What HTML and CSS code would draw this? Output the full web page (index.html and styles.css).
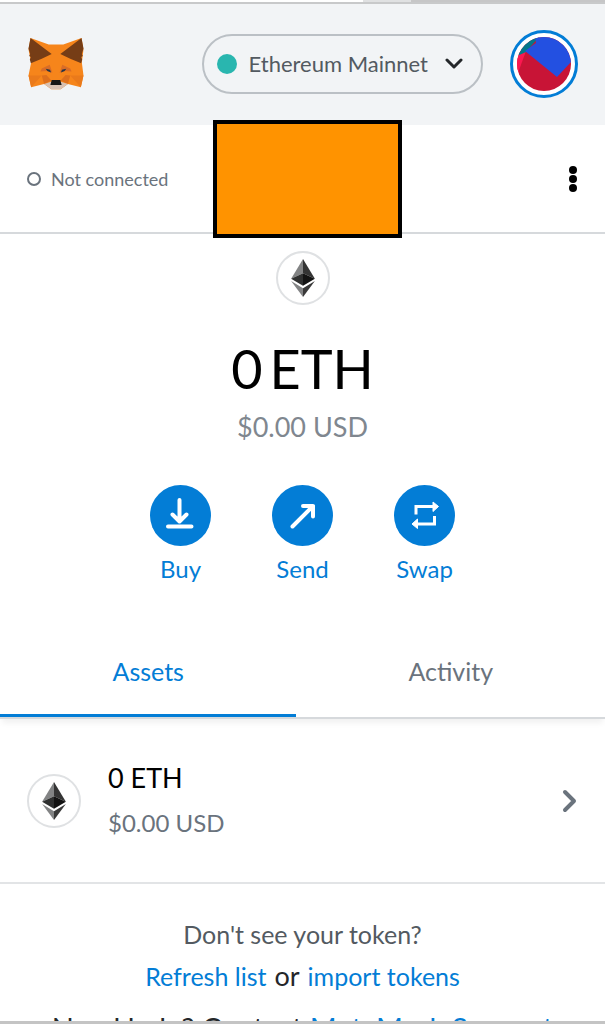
FILE: index.html
```html
<!DOCTYPE html>
<html lang="en">
<head>
<meta charset="utf-8">
<meta name="viewport" content="width=device-width, initial-scale=1">
<title>MetaMask</title>
<link rel="stylesheet" href="styles.css">
</head>
<body>
<svg class="defs" aria-hidden="true">
  <symbol id="eth" viewBox="0 0 70 112">
    <path fill="#828384" d="M35 0 0 58 35 42z"/>
    <path fill="#343434" d="M35 0 70 58 35 42z"/>
    <path fill="#2f3030" d="M0 58 35 42V79z"/>
    <path fill="#131313" d="M70 58 35 42V79z"/>
    <path fill="#828384" d="M0 65 35 86V112z"/>
    <path fill="#393939" d="M70 65 35 86V112z"/>
  </symbol>
</svg>
<div class="popup">
  <div class="strip"><span class="strip-light"></span><span class="strip-dark"></span></div>
  <header class="header">
    <svg class="fox" viewBox="42 40 166 157" role="img" aria-label="MetaMask">
      <path fill="#f6851b" d="M48 40 103 60H147L202 40 208 75 203 114 208 153 200 189 161 179 139 195H111L89 179 50 189 42 153 50 114 42 75z"/>
      <path fill="#763d16" d="M48 40 112 88 82 103 49 116 46 105 49 97 44 94 47 88 42 72z"/>
      <path fill="#763d16" d="M202 40 138 88 168 103 201 116 204 105 201 97 206 94 203 88 208 72z"/>
      <path fill="#ea7a1b" d="M42 153H82L50 189zM208 153H168L200 189z"/>
      <path fill="#dd6f1c" d="M82 153 96 152 111 168 89 179zM168 153 154 152 139 168 161 179z"/>
      <path fill="#d96d27" d="M82 132 106 121 114 145 96 140 78 141zM168 132 144 121 136 145 154 140 172 141z"/>
      <path fill="#233447" d="M94 133 107 136 110 144 99 140zM156 133 143 136 140 144 151 140z"/>
      <path fill="#d7c1b3" d="M89 179 110 172H140L161 179 139 195H111z"/>
      <path fill="#161616" d="M112 167H138L142 182H108z"/>
    </svg>
    <button class="network" type="button">
      <span class="network-dot"></span>
      <span>Ethereum Mainnet</span>
      <svg class="network-chevron" viewBox="0 0 18 12"><path d="M2 2 9 9 16 2"/></svg>
    </button>
    <button class="account" type="button" aria-label="Account">
      <svg viewBox="0 0 54 54">
        <clipPath id="disc"><circle cx="27" cy="27" r="27"/></clipPath>
        <g clip-path="url(#disc)">
          <path fill="#c81436" d="M0 0H54V54H0z"/>
          <path fill="#fb1850" d="M0 14H9L1 36H0z"/>
          <path fill="#03788a" d="M0 0H22L9 15 0 19z"/>
          <path fill="#2350e1" d="M18 0H54V25L40 40 8 14 19 6z"/>
        </g>
      </svg>
    </button>
  </header>
  <div class="menu-bar">
    <button class="connection" type="button"><span class="connection-ring"></span>Not connected</button>
    <div class="cover"></div>
    <button class="more" type="button" aria-label="Account options">
      <svg viewBox="0 0 8 28"><circle cx="4" cy="5" r="4"/><circle cx="4" cy="14" r="4"/><circle cx="4" cy="23" r="4"/></svg>
    </button>
  </div>
  <main>
    <section class="overview">
      <span class="token"><svg><use href="#eth"/></svg></span>
      <h1 class="balance"><span>0</span> <span>ETH</span></h1>
      <p class="fiat">$0.00 USD</p>
      <div class="actions">
        <button class="action" type="button">
          <svg viewBox="0 0 61 61"><circle cx="30.5" cy="30.5" r="30.5"/><path class="round" d="M29.500 15V35M22.500 29.500 29.500 36.500 36.500 29.500M18 41.500H41.500"/></svg>
          Buy
        </button>
        <button class="action" type="button">
          <svg viewBox="0 0 61 61"><circle cx="30.500" cy="30.500" r="30.500"/><path class="round" d="M20.500 41.500 41 21M31 21H41V31.500"/></svg>
          Send
        </button>
        <button class="action" type="button">
          <svg viewBox="0 0 61 61"><circle cx="30.500" cy="30.500" r="30.500"/><path d="M22 29.500V21.500H40M40.500 31V39H22"/><path class="tip" d="M39 17 44.500 21.500 39 26.500zM23.500 34 18 39 23.500 43.500z"/></svg>
          Swap
        </button>
      </div>
    </section>
    <nav class="tabs">
      <button class="tab tab-active" type="button">Assets</button>
      <button class="tab" type="button">Activity</button>
    </nav>
    <button class="asset" type="button">
      <span class="token"><svg><use href="#eth"/></svg></span>
      <span class="asset-text">
        <span class="asset-amount">0 ETH</span>
        <span class="asset-fiat">$0.00 USD</span>
      </span>
      <svg class="asset-chevron" viewBox="0 0 16 26"><path d="M3 4 12 13 3 22"/></svg>
    </button>
    <footer class="footer">
      <p class="hint">Don't see your token?</p>
      <p class="links"><a href="#">Refresh list</a> <span class="or">or</span> <a href="#">import tokens</a></p>
      <p class="help">Need help? Contact <a href="#">MetaMask Support</a></p>
    </footer>
  </main>
</div>
</body>
</html>
```
FILE: styles.css
```css
* { box-sizing: border-box; }
body {
  margin: 0;
  background: #fff;
  color: #24272a;
  font-family: Lato, "Open Sans", sans-serif;
  font-size: 24px;
  line-height: 32px;
}
h1, p { margin: 0; }
button {
  padding: 0;
  border: 0;
  background: none;
  color: inherit;
  font: inherit;
  cursor: pointer;
}
svg { display: block; }
a { color: #037dd6; text-decoration: none; }
.defs { display: none; }

.popup {
  display: flex;
  flex-direction: column;
  height: 100vh;
  overflow: hidden;
  border-bottom: 3px solid #c4c4c4;
}
.popup > * { flex: none; }
.strip {
  display: flex;
  justify-content: flex-end;
  height: 4px;
  border-bottom: 2px solid #c8c9ca;
}
.strip-light { width: 8%; background: #e0e1e2; }
.strip-dark { width: 32%; background: #c6c6c7; }

.header {
  display: flex;
  align-items: center;
  height: 121px;
  padding: 0 27px 2px 28px;
  background: #f2f4f6;
}
.fox { width: 56px; height: 52px; margin-right: auto; }
.network {
  display: flex;
  align-items: center;
  height: 60px;
  padding: 0 18px 0 13px;
  border: 2px solid #bbc0c5;
  border-radius: 30px;
  color: #535a61;
  font-size: 22px;
}
.network-dot {
  width: 20px;
  height: 20px;
  margin-right: 12px;
  border-radius: 50%;
  background: #29b6af;
}
.network-chevron {
  width: 18px;
  height: 12px;
  margin-left: 17px;
  fill: none;
  stroke: #24272a;
  stroke-width: 3;
  stroke-linecap: round;
  stroke-linejoin: round;
}
.account {
  width: 68px;
  height: 68px;
  margin-left: 27px;
  padding: 4px;
  border: 3px solid #037dd6;
  border-radius: 50%;
  background: #fff;
}

.menu-bar {
  position: relative;
  display: flex;
  align-items: center;
  justify-content: space-between;
  height: 109px;
  padding: 0 28px 0 27px;
  border-bottom: 2px solid #d6d9dc;
}
.connection {
  display: flex;
  align-items: center;
  gap: 10px;
  color: #6a737d;
  font-size: 18px;
}
.connection-ring {
  width: 14px;
  height: 14px;
  border: 2px solid #6a737d;
  border-radius: 50%;
}
.more svg { width: 8px; height: 28px; }
.cover {
  position: absolute;
  top: -5px;
  left: 50%;
  width: 189px;
  height: 118px;
  margin-left: -90px;
  border: 4px solid #000;
  background: #ff9300;
}

.overview {
  display: flex;
  flex-direction: column;
  align-items: center;
  padding: 17px 0 44px;
}
.token {
  display: grid;
  flex: none;
  place-items: center;
  width: 54px;
  height: 54px;
  border: 2px solid #dfe1e3;
  border-radius: 50%;
  background: #fff;
}
.token svg { width: 24px; height: 38px; }
.balance {
  display: flex;
  gap: 7px;
  margin-top: 32px;
  color: #000;
  font-size: 54px;
  font-weight: 400;
  line-height: 64px;
}
.fiat { margin-top: 10px; color: #80878f; font-size: 27px; }
.actions { display: flex; margin-top: 42px; }
.action {
  display: flex;
  flex-direction: column;
  align-items: center;
  gap: 7px;
  width: 122px;
  color: #037dd6;
}
.action svg { width: 61px; height: 61px; }
.action circle { fill: #037dd6; }
.action path { fill: none; stroke: #fff; stroke-width: 3; }
.action .round { stroke-width: 4; stroke-linecap: round; stroke-linejoin: round; }
.action .tip { fill: #fff; stroke-width: 1; }

.tabs {
  display: flex;
  border-bottom: 2px solid #d6d9dc;
  box-shadow: 0 6px 6px -2px rgba(0, 0, 0, .06);
}
.tab {
  flex: 1;
  padding: 26px 0 27px;
  border-bottom: 3px solid transparent;
  color: #6a737d;
  font-size: 25px;
}
.tab-active { flex: 0 0 49%; border-color: #037dd6; color: #037dd6; }

.asset {
  display: flex;
  align-items: center;
  width: 100%;
  height: 165px;
  padding: 0 27px;
  border-bottom: 2px solid #e2e4e6;
  text-align: left;
}
.asset-text {
  display: flex;
  flex: 1;
  flex-direction: column;
  gap: 13px;
  margin-left: 27px;
}
.asset-amount { color: #000; font-size: 27px; }
.asset-fiat { color: #6a737d; }
.asset-chevron {
  width: 16px;
  height: 26px;
  fill: none;
  stroke: #6a737d;
  stroke-width: 4;
  stroke-linecap: round;
  stroke-linejoin: round;
}

.footer {
  display: flex;
  flex-direction: column;
  gap: 10px;
  padding-top: 34px;
  font-size: 25px;
  text-align: center;
}
.hint { color: #535a61; }
.links {
  display: flex;
  align-items: baseline;
  justify-content: center;
  gap: 8px;
}
.or { font-size: 27px; }
.help { margin-top: 10px; font-size: 29px; white-space: nowrap; }
```
